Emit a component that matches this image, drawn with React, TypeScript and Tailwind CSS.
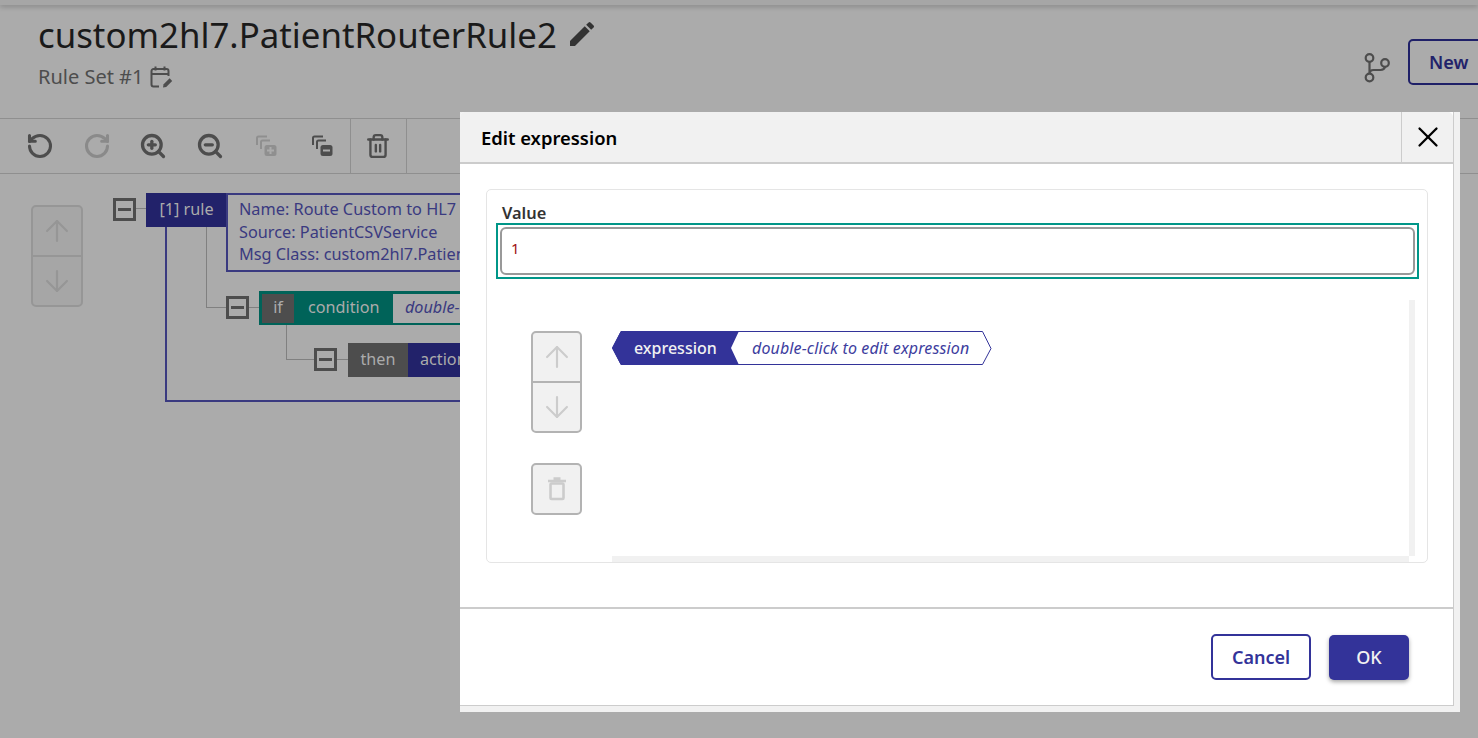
import React from "react";
import { ArrowUp, ArrowDown, RotateCcw, RotateCw, ZoomIn, ZoomOut, Trash2, X } from "lucide-react";
import { MdEdit } from "react-icons/md";

function Expander({ className }: { className: string }) {
  return (
    <div className={`absolute w-[23px] h-[23px] border-[3px] border-[#4d4d4d] flex items-center justify-center ${className}`}>
      <div className="w-[13px] h-[3px] bg-[#4d4d4d]" />
    </div>
  );
}

function CopyIcon({ minus, color }: { minus?: boolean; color: string }) {
  return (
    <svg width="22" height="24" viewBox="0 0 22 24" fill="none" stroke={color} strokeWidth="2">
      <path d="M2 11V4a1.5 1.5 0 0 1 1.5-1.5H12" />
      <path d="M6 15V8a1.5 1.5 0 0 1 1.5-1.5H15" />
      <rect x="9.5" y="11" width="12" height="11" rx="2.5" fill={color} stroke="none" />
      <path d={minus ? "M12 16.5h7" : "M12 16.5h7M15.5 13v7"} stroke="#ababab" />
    </svg>
  );
}

function ToolButton({ children }: { children: React.ReactNode }) {
  return <div className="w-[56.5px] h-full flex items-center justify-center">{children}</div>;
}

function UpDown({ bg, border, icon, w }: { bg: string; border: string; icon: string; w: string }) {
  return (
    <div className={`h-[102px] rounded-[5px] border-2 flex flex-col ${w} ${bg} ${border}`}>
      <div className={`flex-1 flex items-center justify-center border-b-2 ${border}`}>
        <ArrowUp size={34} strokeWidth={1.5} color={icon} />
      </div>
      <div className="flex-1 flex items-center justify-center">
        <ArrowDown size={34} strokeWidth={1.5} color={icon} />
      </div>
    </div>
  );
}

export default function App() {
  return (
    <div className="relative w-[1478px] h-[738px] overflow-hidden bg-[#ababab] font-['Noto_Sans','Open_Sans',sans-serif]">
      <div className="h-[5px] bg-[#a6a6a6] shadow-[0_2px_5px_rgba(0,0,0,0.2)]" />

      <header className="h-[113px] flex justify-between pl-[38px]">
        <div>
          <div className="flex items-center mt-[7px] h-[46px]">
            <h1 className="text-[34.8px] leading-[46px] text-[#1a1a1a] font-normal">custom2hl7.PatientRouterRule2</h1>
            <MdEdit size={32} color="#333333" className="ml-[9px] -mt-[3px]" />
          </div>
          <div className="flex items-center mt-[6px] h-[26px]">
            <span className="text-[20px] leading-[26px] text-[#4d4d4d]">Rule Set #1</span>
            <svg width="24" height="24" viewBox="0 0 24 24" fill="none" stroke="#4d4d4d" strokeWidth="2" className="ml-[6px]">
              <path d="M10 21.5H4.5a2 2 0 0 1-2-2V6a2 2 0 0 1 2-2h13a2 2 0 0 1 2 2v5" />
              <path d="M6.5 1.5v4M15.5 1.5v4M2.5 9h17" />
              <path d="M14 22.5l.6-3.2 6-6 2.6 2.6-6 6z" fill="#4d4d4d" stroke="none" />
            </svg>
          </div>
        </div>
        <div className="flex items-start pt-[34px] -mr-[20px]">
          <svg width="26" height="30" viewBox="0 0 26 30" fill="none" stroke="#4d4d4d" strokeWidth="2.2" className="mt-[14px] mr-[18px]">
            <circle cx="5.5" cy="5" r="3.8" />
            <circle cx="5.5" cy="24.5" r="3.8" />
            <circle cx="21" cy="10" r="3.8" />
            <path d="M5.5 8.8v11.9M5.5 21c0-2.5 1.5-4 4-4h7c2.5 0 4-1 4.5-3.2" />
          </svg>
          <button className="w-[90px] h-[46px] border-2 border-[#1f2068] rounded-[5px] text-[18px] font-semibold text-[#22226a] text-left pl-[19px] shrink-0">New</button>
        </div>
      </header>

      <div className="h-[56px] flex items-stretch border-y border-[#8f8f8f] bg-[#ababab] pl-[12px]">
        <ToolButton><RotateCcw size={28} strokeWidth={2.6} color="#4d4d4d" /></ToolButton>
        <ToolButton><RotateCw size={28} strokeWidth={2.6} color="#8a8a8a" /></ToolButton>
        <ToolButton><ZoomIn size={28} strokeWidth={2.8} color="#4d4d4d" /></ToolButton>
        <ToolButton><ZoomOut size={28} strokeWidth={2.8} color="#4d4d4d" /></ToolButton>
        <ToolButton><CopyIcon color="#8f8f8f" /></ToolButton>
        <div className="w-[56px] flex items-center justify-center border-r border-[#8f8f8f]"><CopyIcon minus color="#4d4d4d" /></div>
        <div className="w-[56px] flex items-center justify-center border-r border-[#8f8f8f]"><Trash2 size={26} strokeWidth={2.2} color="#4d4d4d" /></div>
      </div>

      <div className="relative h-[564px]">
        <div className="absolute left-[31px] top-[31px]">
          <UpDown w="w-[52px]" bg="bg-[#a6a6a6]" border="border-[#969696]" icon="#969696" />
        </div>

        <Expander className="left-[113px] top-[24px]" />
        <div className="absolute left-[136px] top-[34px] w-[10px] h-[1px] bg-[#808080]" />
        <div className="absolute left-[146px] top-[19px] w-[81px] h-[34px] bg-[#22226a] text-[#ababab] text-[16.2px] leading-[32px] text-center">[1] rule</div>
        <div className="absolute left-[226px] top-[19px] w-[234px] h-[79px] border-2 border-[#3a3a80] border-r-0 pl-[11px] pt-[3px] text-[16.3px] leading-[22.5px] text-[#3a3a80] whitespace-nowrap overflow-hidden">
          <div>Name: Route Custom to HL7</div>
          <div>Source: PatientCSVService</div>
          <div>Msg Class: custom2hl7.Patient</div>
        </div>

        <div className="absolute left-[165px] top-[53px] w-[295px] h-[175px] border-l-2 border-b-2 border-[#3a3a80]" />
        <div className="absolute left-[206px] top-[53px] w-[21px] h-[81px] border-l border-b border-[#808080]" />
        <Expander className="left-[226px] top-[122px]" />
        <div className="absolute left-[249px] top-[133px] w-[10px] h-[1px] bg-[#808080]" />
        <div className="absolute left-[259px] top-[117px] w-[201px] h-[34px] bg-[#006359] flex items-center text-[16.2px] text-[#ababab] whitespace-nowrap overflow-hidden">
          <div className="ml-[3px] w-[32px] shrink-0 h-[29px] bg-[#4d4d4d] leading-[27px] text-center">if</div>
          <div className="ml-[14px] w-[85px] shrink-0 -mt-[2px]">condition</div>
          <div className="w-[67px] shrink-0 h-[29px] bg-[#ababab] pl-[12px] leading-[27px] italic text-[#3a3a80] overflow-hidden">double-</div>
        </div>

        <div className="absolute left-[286px] top-[151px] w-[29px] h-[35px] border-l border-b border-[#808080]" />
        <Expander className="left-[314px] top-[174px]" />
        <div className="absolute left-[337px] top-[185px] w-[11px] h-[1px] bg-[#808080]" />
        <div className="absolute left-[348px] top-[169px] w-[60px] h-[34px] bg-[#4d4d4d] text-[#ababab] text-[16.2px] leading-[32px] text-center">then</div>
        <div className="absolute left-[408px] top-[169px] w-[52px] h-[34px] bg-[#22226a] text-[#ababab] text-[16.2px] leading-[32px] pl-[12px] whitespace-nowrap overflow-hidden">action</div>
      </div>

      <div className="absolute left-[460px] top-[112px] w-[1000px] h-[600px] bg-[#f1f1f1]">
        <div className="w-[994px] h-[594px] bg-white border-r border-b border-[#cccccc] rounded-tl-[5px] flex flex-col">
          <div className="h-[52px] shrink-0 flex items-stretch justify-between bg-[#f1f1f1] border-b-2 border-[#cccccc] rounded-t-[5px]">
            <div className="pl-[21px] text-[18.4px] font-semibold leading-[52px] text-black">Edit expression</div>
            <div className="w-[52px] border-l border-[#cccccc] flex items-center justify-center">
              <X size={34} strokeWidth={1.6} color="#000000" />
            </div>
          </div>

          <div className="ml-[26px] mt-[25px] w-[942px] h-[374px] border border-[#e5e5e5] rounded-[5px] shrink-0">
            <div className="pl-[15px] pt-[13px] text-[16.4px] leading-[20px] font-semibold text-[#333333]">Value</div>
            <div className="ml-[9px] w-[923px] h-[56px] border-2 border-[#009688] p-[2px]">
              <div className="h-full border-2 border-[#999999] rounded-[6px] pl-[9px] text-[15px] leading-[38px] text-[#a01010]">1</div>
            </div>

            <div className="flex mt-[21px] h-[262px]">
              <div className="w-[125px] shrink-0 pl-[44px] pt-[31px]">
                <UpDown w="w-[51px]" bg="bg-[#f1f1f1]" border="border-[#b3b3b3]" icon="#cccccc" />
                <div className="mt-[30px] w-[51px] h-[52px] bg-[#f1f1f1] border-2 border-[#b3b3b3] rounded-[5px] flex items-center justify-center">
                  <svg width="20" height="24" viewBox="0 0 20 24" fill="none" stroke="#cccccc" strokeWidth="2.6">
                    <path d="M1 4h18M6.5 1.5h7" />
                    <rect x="3.5" y="6.5" width="13" height="15.5" rx="1" />
                  </svg>
                </div>
              </div>
              <div className="w-[803px] flex flex-col">
                <div className="flex-1 flex min-h-0">
                  <div className="flex-1 pt-[31px]">
                    <div className="relative w-[380px] h-[34px] flex items-center">
                      <svg width="380" height="35" viewBox="0 0 380 35" className="absolute left-0 top-0">
                        <path d="M9 .5H370.5L379 17.5L370.5 33.5H9L.5 17Z" fill="#ffffff" stroke="#333399" strokeWidth="1" />
                        <path d="M9 0H127L119 17L127 34H9L0 17Z" fill="#333399" />
                      </svg>
                      <span className="relative ml-[22px] w-[118px] shrink-0 text-[16px] font-medium text-[#f1f1f1] leading-[34px]">expression</span>
                      <span className="relative text-[16px] italic tracking-[0.13px] text-[#3d3d9e] leading-[34px] whitespace-nowrap">double-click to edit expression</span>
                    </div>
                  </div>
                  <div className="w-[6px] bg-[#f1f1f1]" />
                </div>
                <div className="h-[6px] mr-[6px] bg-[#f1f1f1] shrink-0" />
              </div>
            </div>
          </div>

          <div className="mt-[44px] flex-1 border-t-2 border-[#cccccc] flex items-start justify-end pr-[44px] pt-[25px] gap-[18px]">
            <button className="w-[100px] h-[46px] border-2 border-[#333399] rounded-[5px] text-[18px] font-semibold text-[#333399] bg-white">Cancel</button>
            <button className="w-[80px] h-[45px] mt-[1px] rounded-[5px] text-[18px] font-medium text-[#f1f1f1] bg-[#333399] shadow-[0_2px_4px_rgba(0,0,0,0.35)]">OK</button>
          </div>
        </div>
      </div>
    </div>
  );
}
